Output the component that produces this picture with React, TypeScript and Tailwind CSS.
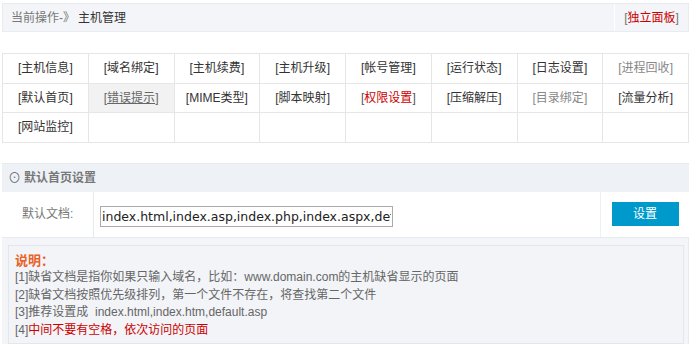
import React from "react";

type Item = { label: string; tone?: "gray" | "red" | "hover" };

const rows: (Item | null)[][] = [
  [
    { label: "主机信息" },
    { label: "域名绑定" },
    { label: "主机续费" },
    { label: "主机升级" },
    { label: "帐号管理" },
    { label: "运行状态" },
    { label: "日志设置" },
    { label: "进程回收", tone: "gray" },
  ],
  [
    { label: "默认首页" },
    { label: "错误提示", tone: "hover" },
    { label: "MIME类型" },
    { label: "脚本映射" },
    { label: "权限设置", tone: "red" },
    { label: "压缩解压" },
    { label: "目录绑定", tone: "gray" },
    { label: "流量分析" },
  ],
  [{ label: "网站监控" }, null, null, null, null, null, null, null],
];

const font = { fontFamily: '"Liberation Sans", "Noto Sans CJK SC", sans-serif' };

function Cell({ item }: { item: Item | null }) {
  if (!item) return <td className="border border-[#e6e6e6] h-[29.5px]" />;
  if (item.tone === "red") {
    return (
      <td className="border border-[#e6e6e6] text-center text-[#555]">
        [<span className="text-[#cc0000]">{item.label}</span>]
      </td>
    );
  }
  const tone =
    item.tone === "gray"
      ? "text-[#888]"
      : item.tone === "hover"
      ? "text-[#666] underline bg-[#f2f2f2]"
      : "text-[#333]";
  return <td className={`border border-[#e6e6e6] text-center ${tone}`}>[{item.label}]</td>;
}

export default function App() {
  return (
    <div className="w-[692px] h-[344px] bg-white overflow-hidden text-[12px]" style={font}>
      {/* header */}
      <div className="mt-[3px] mx-[2px] w-[687px] h-[29px] flex bg-[#f3f5f8] border border-[#e8ecf1]">
        <div className="flex-1 flex items-center pl-[8px]">
          <span className="text-[#777]">当前操作-》</span>
          <span className="text-[#333] ml-[3px]">主机管理</span>
        </div>
        <div className="w-[74px] border-l border-white flex items-center justify-center text-[#777]">
          [<span className="text-[#cc0000]">独立面板</span>]
        </div>
      </div>

      {/* menu */}
      <table className="mt-[21px] ml-[2px] w-[687px] border-collapse table-fixed">
        <tbody>
          {rows.map((r, i) => (
            <tr key={i} className="h-[29.5px]">
              {r.map((it, j) => (
                <Cell key={j} item={it} />
              ))}
            </tr>
          ))}
        </tbody>
      </table>

      {/* default page settings */}
      <div className="mt-[20px] mx-[2px] w-[687px]">
        <div className="h-[29px] bg-[#eef2f7] border-t border-[#e6eaf0] flex items-center pl-[6px] font-bold text-[#777]">
          <span className="mr-[3px] text-[13px] font-normal">⊙</span>默认首页设置
        </div>
        <div className="h-[46px] flex border-b border-[#e6eaf0]">
          <div className="w-[92px] border-r border-[#e6eaf0] flex items-center pl-[20px] text-[#777]">
            默认文档:
          </div>
          <div className="flex-1 flex items-center pl-[6px] border-r border-[#eef0f3]">
            <input
              readOnly
              value="index.html,index.asp,index.php,index.aspx,default.htm"
              className="w-[293px] h-[21px] mt-[4px] border border-[#aaa] px-[1px] text-[#222] outline-none"
              style={{ fontFamily: '"DejaVu Sans", sans-serif', fontSize: 12.5 }}
            />
          </div>
          <div className="w-[88px] flex items-center justify-center">
            <button className="w-[67px] h-[24px] bg-[#0099cc] text-white text-[12px]">设置</button>
          </div>
        </div>

        <div className="bg-[#f3f5f9] pt-[7px] pl-[6px] pr-[4px] h-[106px] border-r border-[#e6eaf0]">
          <div className="h-full border border-[#e3e7ed] bg-[#f2f4f8] pl-[6px] pt-[6px] leading-[17.5px] text-[#666]">
            <div className="font-bold text-[#e8622a] text-[13px]">说明：</div>
            <div>[1]缺省文档是指你如果只输入域名，比如：www.domain.com的主机缺省显示的页面</div>
            <div>[2]缺省文档按照优先级排列，第一个文件不存在，将查找第二个文件</div>
            <div>[3]推荐设置成&nbsp; index.html,index.htm,default.asp</div>
            <div>
              [4]<span className="text-[#cc0000]">中间不要有空格，依次访问的页面</span>
            </div>
          </div>
        </div>
      </div>
    </div>
  );
}
